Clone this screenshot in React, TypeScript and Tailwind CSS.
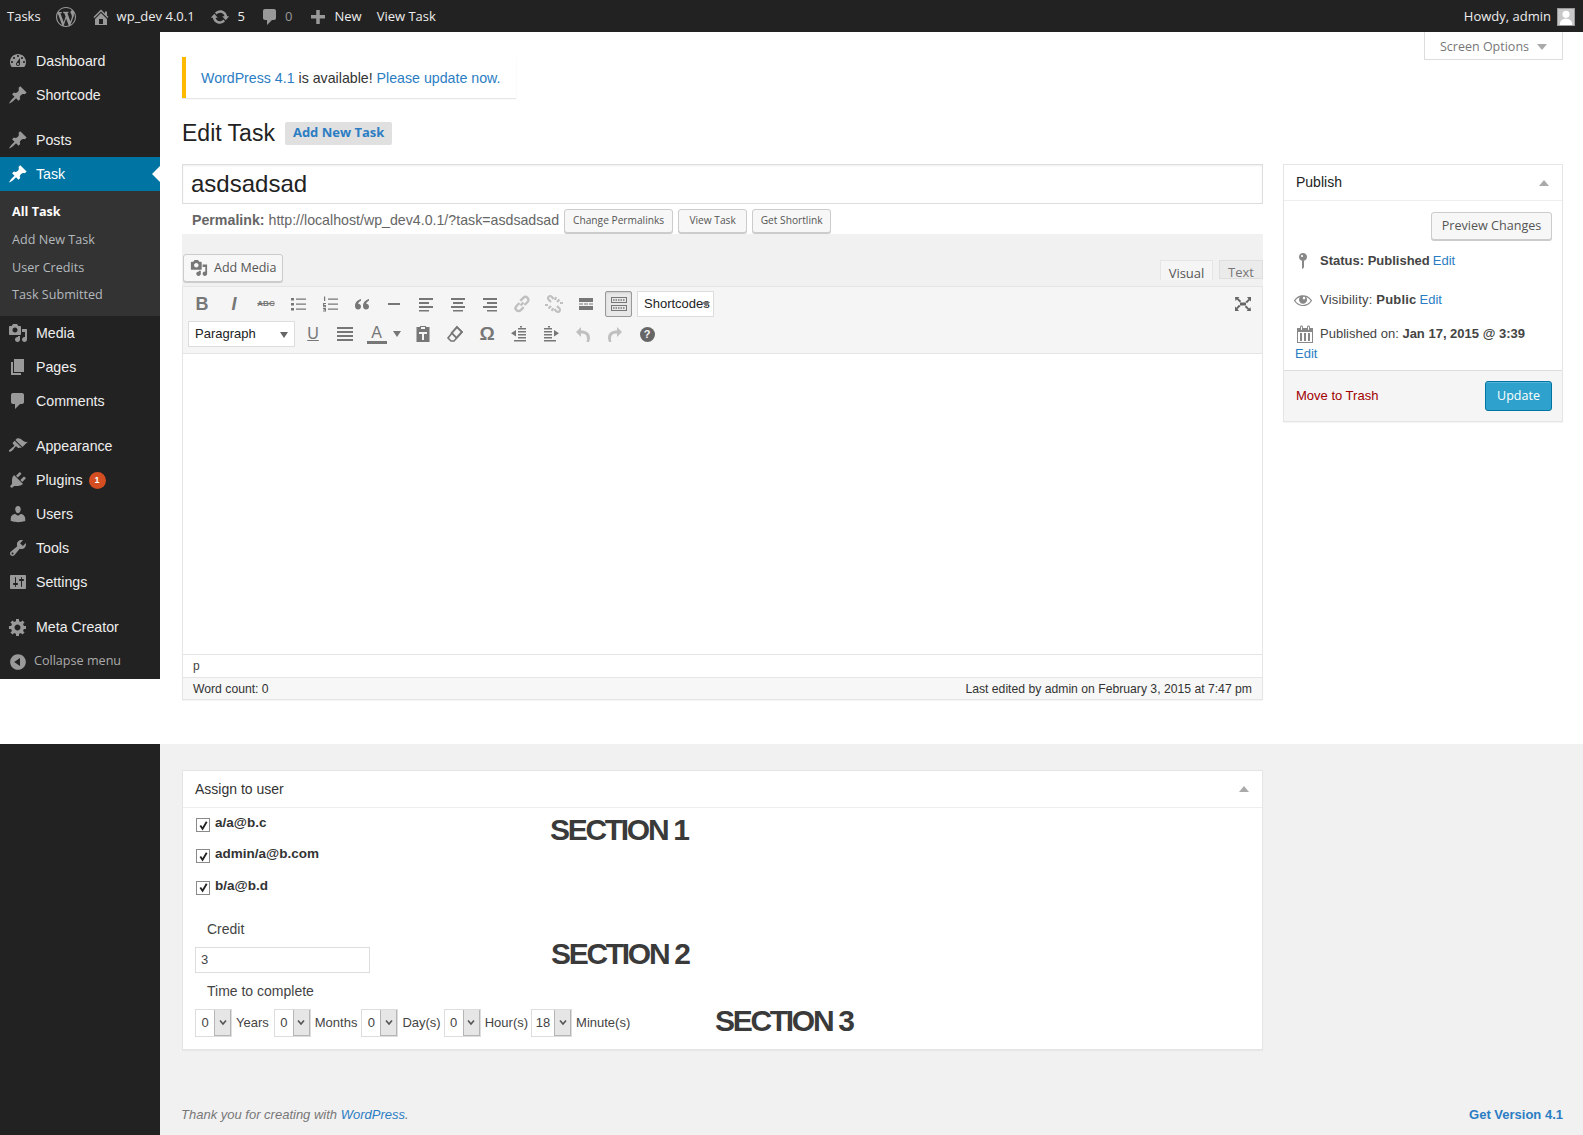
import type { ReactNode } from "react";

const sans = "font-['Liberation_Sans',Arial,sans-serif]";
const open = "font-['Open_Sans',Arial,sans-serif]";
const linkBlue = "text-[#2b7dc3]";

function Dash({ d, size = 20, className = "" }: { d: string; size?: number; className?: string }) {
  return (
    <svg viewBox="0 0 20 20" width={size} height={size} fill="currentColor" className={`shrink-0 ${className}`}>
      <path d={d} />
    </svg>
  );
}

const icons = {
  dashboard:
    "M3.76 16h12.48c1.1-1.37 1.76-3.11 1.76-5 0-4.42-3.58-8-8-8s-8 3.58-8 8c0 1.89.66 3.63 1.76 5zM10 4c.55 0 1 .45 1 1s-.45 1-1 1-1-.45-1-1 .45-1 1-1zM6 6c.55 0 1 .45 1 1s-.45 1-1 1-1-.45-1-1 .45-1 1-1zm8 0c.55 0 1 .45 1 1s-.45 1-1 1-1-.45-1-1 .45-1 1-1zm-5.37 5.55L12 7v6c0 1.1-.9 2-2 2s-2-.9-2-2c0-.57.24-1.08.63-1.45zM4 10c.55 0 1 .45 1 1s-.45 1-1 1-1-.45-1-1 .45-1 1-1zm12 0c.55 0 1 .45 1 1s-.45 1-1 1-1-.45-1-1 .45-1 1-1zm-5 3c0-.55-.45-1-1-1s-1 .45-1 1 .45 1 1 1 1-.45 1-1z",
  pin: "M10.44 3.02l1.82-1.82 6.36 6.35-1.83 1.82c-1.05-.68-2.48-.57-3.41.36l-.75.75c-.92.93-1.04 2.35-.35 3.41l-1.83 1.82-2.41-2.41-2.8 2.79c-.42.42-3.38 2.71-3.8 2.29s1.86-3.39 2.28-3.81l2.79-2.79L4.1 9.36l1.83-1.82c1.05.69 2.48.57 3.4-.36l.75-.75c.93-.92 1.05-2.35.36-3.41z",
  media:
    "M13 11V4c0-.55-.45-1-1-1h-1.67L9 1H5L3.67 3H2c-.55 0-1 .45-1 1v7c0 .55.45 1 1 1h10c.55 0 1-.45 1-1zM7 4.5c1.38 0 2.5 1.12 2.5 2.5S8.38 9.5 7 9.5 4.5 8.38 4.5 7 5.62 4.5 7 4.5zM14 6h5v10.5c0 1.38-1.12 2.5-2.5 2.5S14 17.88 14 16.5s1.12-2.5 2.5-2.5c.17 0 .34.02.5.05V9h-3V6zm-4 8.05V13h2v3.5c0 1.38-1.12 2.5-2.5 2.5S7 17.88 7 16.5 8.12 14 9.5 14c.17 0 .34.02.5.05z",
  page: "M6 15V2h10v13H6zm-1 1h8v2H3V5h2v11z",
  comment: "M5 2h9c1.1 0 2 .9 2 2v7c0 1.1-.9 2-2 2h-2l-5 5v-5H5c-1.1 0-2-.9-2-2V4c0-1.1.9-2 2-2z",
  appearance:
    "M14.48 11.06L7.41 3.99l1.5-1.5c.5-.56 2.3-.47 3.51.32 1.21.8 1.43 1.28 2.91 2.1 1.18.64 2.45 1.26 4.45.85zm-.71.71L6.7 4.7 4.93 6.47c-.39.39-.39 1.02 0 1.41l1.06 1.06c.39.39.39 1.03 0 1.42-.6.6-1.43 1.11-2.21 1.69-.35.26-.7.53-1.01.84C1.43 13.23.4 14.91 1.1 15.6c.7.7 2.38-.33 3.72-1.67.31-.31.58-.66.84-1.01.58-.78 1.09-1.61 1.69-2.21.39-.39 1.02-.39 1.41 0l1.06 1.06c.39.39 1.02.39 1.41 0z",
  plugins:
    "M13.11 4.36L9.87 7.6 8 5.73l3.24-3.24c.35-.34 1.05-.2 1.56.32.52.51.66 1.21.31 1.55zm-8 1.77l.91-1.12 9.01 9.01-1.19.84c-.71.71-2.63 1.16-3.82 1.16H6.14L4.9 17.26c-.59.59-1.54.59-2.12 0-.59-.58-.59-1.53 0-2.12l1.24-1.24v-3.88c0-1.13.4-3.19 1.09-3.89zm7.26 3.97l3.24-3.24c.34-.35 1.04-.21 1.55.31.52.51.66 1.21.31 1.55l-3.24 3.25z",
  users:
    "M10 9.25c-2.27 0-2.73-3.44-2.73-3.44C7 4.02 7.82 2 9.97 2c2.16 0 2.98 2.02 2.71 3.81 0 0-.41 3.44-2.68 3.44zm0 2.57L12.72 10c2.39 0 4.52 2.33 4.52 4.53v2.49s-3.65 1.13-7.24 1.13c-3.65 0-7.24-1.13-7.24-1.13v-2.49c0-2.25 1.94-4.48 4.47-4.48z",
  tools:
    "M16.68 9.77c-1.34 1.34-3.3 1.67-4.95.99l-5.41 6.52c-.99.99-2.59.99-3.58 0s-.99-2.59 0-3.57l6.52-5.42c-.68-1.65-.35-3.61.99-4.95 1.28-1.28 3.12-1.62 4.72-1.06l-2.89 2.89 2.82 2.82 2.86-2.87c.53 1.58.18 3.39-1.08 4.65zM3.81 16.21c.4.39 1.04.39 1.43 0 .4-.4.4-1.04 0-1.43-.39-.4-1.03-.4-1.43 0-.39.39-.39 1.03 0 1.43z",
  settings:
    "M18 16V4c0-.55-.45-1-1-1H3c-.55 0-1 .45-1 1v12c0 .55.45 1 1 1h14c.55 0 1-.45 1-1zM8 11h1c.55 0 1 .45 1 1s-.45 1-1 1H8v1.5c0 .28-.22.5-.5.5s-.5-.22-.5-.5V13H6c-.55 0-1-.45-1-1s.45-1 1-1h1V5.5c0-.28.22-.5.5-.5s.5.22.5.5V11zm5-2h-1c-.55 0-1-.45-1-1s.45-1 1-1h1V5.5c0-.28.22-.5.5-.5s.5.22.5.5V7h1c.55 0 1 .45 1 1s-.45 1-1 1h-1v5.5c0 .28-.22.5-.5.5s-.5-.22-.5-.5V9z",
  gear: "M18 12h-2.18c-.17.7-.44 1.35-.81 1.93l1.54 1.54-2.1 2.1-1.54-1.54c-.58.36-1.23.63-1.91.79V19H8v-2.18c-.68-.16-1.33-.43-1.91-.79l-1.54 1.54-2.12-2.12 1.54-1.54c-.36-.58-.63-1.23-.79-1.91H1V9.03h2.17c.16-.7.44-1.35.8-1.94L2.43 5.55l2.1-2.1 1.54 1.54c.58-.37 1.24-.64 1.93-.81V2h3v2.18c.68.16 1.33.43 1.91.79l1.54-1.54 2.12 2.12-1.54 1.54c.36.59.64 1.24.8 1.94H18V12zm-8.5 1.5c1.66 0 3-1.34 3-3s-1.34-3-3-3-3 1.34-3 3 1.34 3 3 3z",
  collapse: "M10 2.16c4.33 0 7.84 3.51 7.84 7.84s-3.51 7.84-7.84 7.84S2.16 14.33 2.16 10 5.71 2.16 10 2.16zm2 11.72V6.12L6.18 9.97z",
  home: "M16 8.5l1.53 1.53-1.06 1.06L10 4.62l-6.47 6.47-1.06-1.06L10 2.5l4 4v-2h2v4zm-6-2.46l6 5.99V18H4v-5.97zM12 17v-5H8v5h4z",
  update:
    "M10.2 3.28c3.53 0 6.43 2.61 6.92 6h2.08l-3.5 4-3.5-4h2.32c-.45-1.97-2.21-3.45-4.32-3.45-1.45 0-2.73.71-3.54 1.78L4.95 5.66C6.23 4.2 8.11 3.28 10.2 3.28zm-.4 13.44c-3.52 0-6.43-2.61-6.92-6H.8l3.5-4c1.17 1.33 2.33 2.67 3.5 4H5.48c.45 1.97 2.21 3.45 4.32 3.45 1.45 0 2.73-.71 3.54-1.78l1.71 1.95c-1.28 1.46-3.15 2.38-5.25 2.38z",
  plus: "M17 8v3.5h-5.25V17h-3.5v-5.5H3V8h5.25V3h3.5v5z",
  wp: "M20 10c0-5.51-4.49-10-10-10C4.48 0 0 4.49 0 10c0 5.52 4.48 10 10 10 5.51 0 10-4.48 10-10zM7.78 15.37L4.37 6.22c.55-.02 1.17-.08 1.17-.08.5-.06.44-1.13-.06-1.11 0 0-1.45.11-2.37.11-.18 0-.37 0-.58-.01C4.12 2.69 6.87 1.11 10 1.11c2.33 0 4.45.87 6.05 2.34-.68-.11-1.65.39-1.65 1.58 0 .74.45 1.36.9 2.1.35.61.55 1.36.55 2.46 0 1.49-1.4 5-1.4 5l-3.03-8.37c.54-.02.82-.17.82-.17.5-.05.44-1.25-.06-1.22 0 0-1.44.12-2.38.12-.87 0-2.33-.12-2.33-.12-.5-.03-.56 1.2-.06 1.22l.92.08 1.26 3.41zM17.41 10c.24-.64.74-1.87.43-4.25.7 1.29 1.05 2.71 1.05 4.25 0 3.29-1.73 6.24-4.4 7.78.97-2.59 1.94-5.2 2.92-7.78zM6.1 18.09C3.12 16.65 1.11 13.53 1.11 10c0-1.3.23-2.48.72-3.59C3.25 10.3 4.67 14.2 6.1 18.09zm4.03-6.63l2.58 6.98c-.86.29-1.76.45-2.71.45-.79 0-1.57-.11-2.29-.33.81-2.38 1.62-4.74 2.42-7.1z",
  eye: "M18.3 9.5C15 4.9 8.5 3.8 3.9 7.2c-1.2.9-2.2 2.1-3 3.4.2.4.5.8.8 1.2 3.3 4.6 9.6 5.6 14.2 2.4.9-.7 1.7-1.4 2.4-2.4.3-.4.5-.8.8-1.2-.3-.4-.5-.8-.8-1.1zm-8.2-2.3c.5-.5 1.3-.5 1.8 0s.5 1.3 0 1.8-1.3.5-1.8 0c-.5-.4-.5-1.3 0-1.8zm-.1 7.7c-3.1 0-6-1.6-7.7-4.2C3.5 9 5.1 7.8 7 7c-.7.8-1 1.7-1 2.7 0 2.2 1.7 4.1 4 4.1 2.2 0 4.1-1.7 4.1-4 0-1-.4-2-1.1-2.7 1.9.8 3.5 2 4.7 3.7-1.7 2.6-4.6 4.2-7.7 4.1z",
  status: "M14 6c0 1.86-1.28 3.41-3 3.86V16c0 1-2 2-2 2V9.86c-1.72-.45-3-2-3-3.86 0-2.21 1.79-4 4-4s4 1.79 4 4zM8 5c0 .55.45 1 1 1s1-.45 1-1-.45-1-1-1-1 .45-1 1z",
  calendar:
    "M15 4h3v15H2V4h3V3c0-.83.67-1.5 1.5-1.5S8 2.17 8 3v1h4V3c0-.83.67-1.5 1.5-1.5S15 2.17 15 3v1zM6 3v2.5c0 .28.22.5.5.5s.5-.22.5-.5V3c0-.28-.22-.5-.5-.5S6 2.72 6 3zm7 0v2.5c0 .28.22.5.5.5s.5-.22.5-.5V3c0-.28-.22-.5-.5-.5s-.5.22-.5.5zm4 15V8H3v10h14zM5 9h2v8H5V9zm4 0h2v8H9V9zm4 0h2v8h-2V9z",
};

type MenuEntry = { label: string; icon: keyof typeof icons; badge?: string };

function MenuItem({ label, icon, badge, active }: MenuEntry & { active?: boolean }) {
  return (
    <div
      className={`relative flex h-[34px] items-center gap-2 pl-2 text-[14.2px] ${
        active ? "bg-[#0074a2] text-white" : "text-[#eeeeee]"
      }`}
    >
      <Dash d={icons[icon]} className={active ? "text-white" : "text-[#999999]"} />
      <span className="pt-[2px]">{label}</span>
      {badge && (
        <span className="-ml-[2px] mt-px flex h-[17px] w-[17px] items-center justify-center rounded-full bg-[#d54e21] text-[9px] font-bold text-white">
          {badge}
        </span>
      )}
      {active && (
        <span className="absolute right-0 top-[9px] h-0 w-0 border-y-[8px] border-r-[8px] border-y-transparent border-r-white" />
      )}
    </div>
  );
}

function Sidebar() {
  const group = (items: MenuEntry[]) => items.map((m) => <MenuItem key={m.label} {...m} />);
  return (
    <aside className={`h-[647px] w-[160px] shrink-0 bg-[#222222] pt-3 ${sans}`}>
      {group([
        { label: "Dashboard", icon: "dashboard" },
        { label: "Shortcode", icon: "pin" },
      ])}
      <div className="h-[11px]" />
      <MenuItem label="Posts" icon="pin" />
      <MenuItem label="Task" icon="pin" active />
      <div className={`flex h-[125px] flex-col bg-[#333333] pl-3 pt-[7px] text-[12.6px] text-[#b4b9be] ${open}`}>
        <div className="flex h-[28px] items-center font-bold text-white">All Task</div>
        <div className="flex h-[28px] items-center">Add New Task</div>
        <div className="flex h-[28px] items-center">User Credits</div>
        <div className="flex h-[26px] items-center">Task Submitted</div>
      </div>
      {group([
        { label: "Media", icon: "media" },
        { label: "Pages", icon: "page" },
        { label: "Comments", icon: "comment" },
      ])}
      <div className="h-[11px]" />
      {group([
        { label: "Appearance", icon: "appearance" },
        { label: "Plugins", icon: "plugins", badge: "1" },
        { label: "Users", icon: "users" },
        { label: "Tools", icon: "tools" },
        { label: "Settings", icon: "settings" },
      ])}
      <div className="h-[11px]" />
      <MenuItem label="Meta Creator" icon="gear" />
      <div className={`flex h-[34px] items-center gap-[6px] pl-2 pt-px text-[12.6px] text-[#aaaaaa] ${open}`}>
        <Dash d={icons.collapse} className="text-[#999999]" />
        <span>Collapse menu</span>
      </div>
    </aside>
  );
}

function AdminBar() {
  return (
    <header className={`flex h-8 shrink-0 items-center bg-[#222222] pt-px text-[13px] text-[#eeeeee] ${open}`}>
      <span className="ml-[7px]">Tasks</span>
      <Dash d={icons.wp} className="ml-[15px] text-[#999999]" />
      <Dash d={icons.home} className="ml-[15px] text-[#999999]" />
      <span className="ml-[6px]">wp_dev 4.0.1</span>
      <Dash d={icons.update} className="ml-[15px] text-[#999999]" />
      <span className="ml-[8px]">5</span>
      <Dash d={icons.comment} className="ml-[15px] text-[#999999]" />
      <span className="ml-[5px] text-[#999999]">0</span>
      <Dash d={icons.plus} className="ml-[16px] text-[#999999]" />
      <span className="ml-[6px]">New</span>
      <span className="ml-[15px]">View Task</span>
      <span className="ml-auto">Howdy, admin</span>
      <span className="ml-[6px] mr-2 flex h-[18px] w-[18px] items-end justify-center overflow-hidden border border-[#999999] bg-[#c8c8c8]">
        <svg viewBox="0 0 18 18" width="16" height="16" fill="#ffffff">
          <circle cx="9" cy="6" r="4" />
          <path d="M2 18c0-5 3-7 7-7s7 2 7 7z" />
        </svg>
      </span>
    </header>
  );
}

function SmallButton({ children, w }: { children: ReactNode; w: string }) {
  return (
    <span className={`flex h-6 items-center justify-center rounded-[3px] border border-[#cccccc] bg-[#f7f7f7] text-[10.2px] text-[#555555] shadow-[0_1px_0_#cccccc] ${open} ${w}`}>
      {children}
    </span>
  );
}

function Bars({ widths }: { widths: number[] }) {
  return (
    <span className="flex flex-col items-center gap-[2px]">
      {widths.map((w, i) => (
        <span key={i} className="h-[2px] bg-[#777777]" style={{ width: w }} />
      ))}
    </span>
  );
}

function ToolIcon({ children, w = "w-8" }: { children: ReactNode; w?: string }) {
  return <span className={`flex h-[26px] shrink-0 items-center justify-center text-[#777777] ${w}`}>{children}</span>;
}

function Svg({ children, muted }: { children: ReactNode; muted?: boolean }) {
  return (
    <svg viewBox="0 0 20 20" width="20" height="20" fill="currentColor" className={muted ? "text-[#c0c0c0]" : ""}>
      {children}
    </svg>
  );
}

function Toolbar() {
  const ul = (
    <Svg>
      <path d="M3 4h3v2.4H3zM3 9h3v2.4H3zM3 14h3v2.4H3zM8 4.5h10v1.2H8zM8 9.5h10v1.2H8zM8 14.5h10v1.2H8z" />
    </Svg>
  );
  const ol = (
    <Svg>
      <path d="M8 4.5h10v1.2H8zM8 9.5h10v1.2H8zM8 14.5h10v1.2H8zM4 2.5h1.2v4.6H4zM3 9h3v1H4.2v1H6v2.2H3v-1h2v-.3H3zM3 14h3v3.4H3v-.9h2v-.4H3.6v-.8H5v-.4H3z" />
    </Svg>
  );
  return (
    <div className="flex h-[68px] flex-col border border-[#e5e5e5] bg-[#f5f5f5] pl-[3px] pt-[4px]">
      <div className="flex h-[26px] items-center">
        <ToolIcon><span className={`text-[18px] font-bold ${sans}`}>B</span></ToolIcon>
        <ToolIcon><span className={`text-[18px] font-bold italic ${sans}`}>I</span></ToolIcon>
        <ToolIcon><span className={`text-[8px] font-bold line-through ${sans}`}>ABC</span></ToolIcon>
        <ToolIcon>{ul}</ToolIcon>
        <ToolIcon>{ol}</ToolIcon>
        <ToolIcon>
          <Svg>
            <path d="M9 5C5.500 6 3 8.500 3 12c0 2 1.200 3.500 3 3.500s3-1.300 3-3-1.200-2.800-2.800-2.800c.3-1.400 1.400-2.400 2.800-3zM17 5c-3.500 1-6 3.500-6 7 0 2 1.200 3.500 3 3.500s3-1.300 3-3-1.200-2.800-2.800-2.800c.3-1.400 1.400-2.400 2.800-3z" />
          </Svg>
        </ToolIcon>
        <ToolIcon><span className="h-[2px] w-[12px] bg-[#777777]" /></ToolIcon>
        <ToolIcon><Svg><path d="M3 4h14v2H3zM3 8h10v2H3zM3 12h14v2H3zM3 16h10v1.500H3z" /></Svg></ToolIcon>
        <ToolIcon><Svg><path d="M3 4h14v2H3zM5 8h10v2H5zM3 12h14v2H3zM5 16h10v1.500H5z" /></Svg></ToolIcon>
        <ToolIcon><Svg><path d="M3 4h14v2H3zM7 8h10v2H7zM3 12h14v2H3zM7 16h10v1.500H7z" /></Svg></ToolIcon>
        <ToolIcon>
          <svg viewBox="0 0 20 20" width="20" height="20" fill="none" stroke="#c0c0c0" strokeWidth="2.400">
            <path d="M8.500 11.500l3-3M7.500 9l-3 3c-1.200 1.200-1.200 3 0 4.200s3 1.200 4.200 0l3-3M12.500 11l3-3c1.200-1.200 1.200-3 0-4.200s-3-1.200-4.200 0l-3 3" />
          </svg>
        </ToolIcon>
        <ToolIcon>
          <svg viewBox="0 0 20 20" width="20" height="20" fill="none" stroke="#c0c0c0" strokeWidth="2.200">
            <path d="M7 8L4.500 5.500c-1.200-1.200 0-3.500 1.500-3.500.8 0 1.300.3 2 1l1.500 2M13 12l2.500 2.500c1.200 1.200 0 3.500-1.500 3.500-.8 0-1.300-.3-2-1l-1.500-2M13 8l2.500-2.500M11 6l1-3M16 9h3M7 12l-2.500 2.500M9 14l-1 3M4 11H1" />
          </svg>
        </ToolIcon>
        <ToolIcon><Svg><path d="M3 4h14v4H3zM3 9.500h4v1H3zM8 9.500h4v1H8zM13 9.500h4v1h-4zM3 12h14v4H3z" /></Svg></ToolIcon>
        <span className="ml-[3px] flex h-[26px] w-[27px] shrink-0 items-center justify-center rounded-[2px] border border-[#999999] bg-[#e8e8e8] text-[#777777] shadow-[inset_0_1px_2px_#cccccc]">
          <svg viewBox="0 0 20 20" width="20" height="20" fill="none" stroke="currentColor">
            <rect x="2.500" y="3.500" width="15" height="5" />
            <rect x="2.500" y="11.500" width="15" height="5" />
            <path d="M4 6h12M4 14h12" strokeDasharray="1.500 1" strokeWidth="1.500" />
          </svg>
        </span>
        <span className={`relative ml-[5px] flex h-[26px] w-[77px] shrink-0 items-center border border-[#dddddd] bg-white pl-[6px] text-[13px] text-[#222222] ${sans}`}>
          Shortcodes
          <span className="absolute right-[3px] top-[10px] h-0 w-0 border-x-[4px] border-t-[5px] border-x-transparent border-t-[#777777]" />
        </span>
        <span className="ml-auto mr-[9px] flex w-5 items-center justify-center text-[#666666]">
          <svg viewBox="0 0 20 20" width="20" height="20" fill="currentColor">
            <path d="M2 3h4.500L5.200 4.300l3 2.700-1.500 1.500-2.700-3L2.500 7zM18 3v4.500l-1.300-1.300-2.700 3-1.500-1.500 3-2.700L14 3zM2 17v-4.500l1.300 1.300 2.700-3 1.500 1.500-3 2.700L6 17zM18 17h-4.500l1.300-1.300-3-2.700 1.500-1.500 2.700 3 1.500-1.300z" />
            <rect x="7" y="8.500" width="6" height="3" />
          </svg>
        </span>
      </div>
      <div className="mt-[4px] flex h-[26px] items-center">
        <span className={`relative ml-[2px] flex h-[26px] w-[107px] shrink-0 items-center border border-[#dddddd] bg-white pl-[6px] text-[13px] text-[#222222] ${sans}`}>
          Paragraph
          <span className="absolute right-[6px] top-[10px] h-0 w-0 border-x-[4px] border-t-[6px] border-x-transparent border-t-[#666666]" />
        </span>
        <span className="w-[2px] shrink-0" />
        <ToolIcon><span className={`text-[16px] underline ${sans}`}>U</span></ToolIcon>
        <ToolIcon><Bars widths={[16, 16, 16, 16]} /></ToolIcon>
        <ToolIcon w="w-[31px]">
          <span className="flex flex-col items-center">
            <span className={`text-[16px] leading-[17px] ${sans}`}>A</span>
            <span className="h-[3px] w-[20px] bg-[#777777]" />
          </span>
        </ToolIcon>
        <span className="ml-[1px] mr-[6px] h-0 w-0 shrink-0 border-x-[4px] border-t-[6px] border-x-transparent border-t-[#777777]" />
        <ToolIcon>
          <Svg>
            <path d="M7 3V2h6v1h3.500v15h-13V3zm1 0v2h4V3zM6 8v2h3v6h2v-6h3V8z" fillRule="evenodd" />
          </Svg>
        </ToolIcon>
        <ToolIcon>
          <svg viewBox="0 0 20 20" width="20" height="20" fill="none" stroke="#777777" strokeWidth="1.600">
            <path d="M12 3l5 5-8 9-3 0-3-3 9-11z" />
            <path d="M12 3l5 5-5.500 6-5-5z" fill="#777777" />
            <path d="M12 4.500l3.500 3.500-4 4.500-3.500-3.500z" fill="#f5f5f5" stroke="none" />
          </svg>
        </ToolIcon>
        <ToolIcon><span className={`text-[19px] font-bold ${sans}`}>Ω</span></ToolIcon>
        <ToolIcon>
          <Svg><path d="M9 4h8v1.500H9zM9 7h8v1.500H9zM9 10h8v1.500H9zM9 13h8v1.500H9zM5 16h12v1.500H5zM7 6v6.500L2 9.200zM11 2h2v1.500h-2z" /></Svg>
        </ToolIcon>
        <ToolIcon>
          <Svg><path d="M3 4h8v1.500H3zM3 7h8v1.500H3zM3 10h8v1.500H3zM3 13h8v1.500H3zM3 16h12v1.500H3zM13 6v6.500l5-3.300zM7 2h2v1.500H7z" /></Svg>
        </ToolIcon>
        <ToolIcon>
          <Svg muted><path d="M8 3L3 8l5 5V9.500c3.500 0 6 1 6 5.500 0 1.500-.2 2.500-.5 3H16c.7-1.500 1-3 1-4.500C17 9 13 6.500 8 6.500z" /></Svg>
        </ToolIcon>
        <ToolIcon>
          <Svg muted><path d="M12 3l5 5-5 5V9.500c-3.500 0-6 1-6 5.500 0 1.500.2 2.500.5 3H4c-.7-1.500-1-3-1-4.500C3 9 7 6.500 12 6.500z" /></Svg>
        </ToolIcon>
        <ToolIcon>
          <span className={`flex h-[15px] w-[15px] items-center justify-center rounded-full bg-[#666666] text-[11px] font-bold text-[#f5f5f5] ${sans}`}>?</span>
        </ToolIcon>
      </div>
    </div>
  );
}

function EditorColumn() {
  return (
    <div className="w-[1081px] shrink-0">
      <div className={`flex h-10 items-center border border-[#dddddd] bg-white pl-2 text-[24px] text-[#222222] shadow-[inset_0_1px_2px_rgba(0,0,0,0.07)] ${sans}`}>
        asdsadsad
      </div>
      <div className="flex h-[30px] items-center gap-[5px] pl-[10px] pt-1 text-[14.2px] text-[#666666]">
        <span>
          <b className="text-[#666666]">Permalink:</b> http://localhost/wp_dev4.0.1/?task=asdsadsad
        </span>
        <SmallButton w="w-[109px]">Change Permalinks</SmallButton>
        <SmallButton w="w-[69px]">View Task</SmallButton>
        <SmallButton w="w-[79px]">Get Shortlink</SmallButton>
      </div>
      <div className="flex h-[52px] items-start justify-between bg-[#f1f1f1] pl-px pt-5">
        <span className={`flex h-7 w-[100px] items-center gap-[6px] rounded-[3px] border border-[#cccccc] bg-[#f7f7f7] pl-[6px] text-[12.5px] text-[#555555] shadow-[0_1px_0_#cccccc] ${open}`}>
          <Dash d={icons.media} size={18} className="text-[#777777]" />
          Add Media
        </span>
        <div className={`mt-[6px] flex text-[13px] text-[#777777] ${open}`}>
          <span className="flex h-5 w-[53px] items-center justify-center border border-b-0 border-[#e5e5e5] bg-[#f5f5f5] pt-[7px] text-[#555555]">Visual</span>
          <span className="ml-[6px] flex h-[19px] w-[44px] items-center justify-center border border-[#dedede] bg-[#ebebeb] pt-[7px]">Text</span>
        </div>
      </div>
      <Toolbar />
      <div className="h-[300px] border-x border-[#e5e5e5] bg-white" />
      <div className="flex h-[23px] items-center border border-b-0 border-[#e5e5e5] bg-white pl-[10px] text-[12px] text-[#444444]">p</div>
      <div className="flex h-[23px] items-center justify-between border border-[#e5e5e5] bg-[#f7f7f7] px-[10px] pt-px text-[12.2px] text-[#333333] shadow-[0_1px_1px_rgba(0,0,0,0.04)]">
        <span>Word count: 0</span>
        <span>Last edited by admin on February 3, 2015 at 7:47 pm</span>
      </div>
    </div>
  );
}

function Caret() {
  return <span className="h-0 w-0 border-x-[5px] border-b-[6px] border-x-transparent border-b-[#aaaaaa]" />;
}

function PublishBox() {
  return (
    <div className="flex h-[258px] w-[280px] shrink-0 flex-col border border-[#e5e5e5] bg-white text-[13px] text-[#444444] shadow-[0_1px_1px_rgba(0,0,0,0.04)]">
      <div className="flex h-[36px] shrink-0 items-center justify-between border-b border-[#eeeeee] pl-3 pr-[13px] text-[14px] text-[#222222]">
        Publish
        <Caret />
      </div>
      <div className="flex h-[39px] shrink-0 items-end justify-end pr-[10px]">
        <span className={`flex h-7 w-[121px] items-center justify-center rounded-[3px] border border-[#cccccc] bg-[#f7f7f7] text-[12.6px] text-[#555555] shadow-[0_1px_0_#cccccc] ${open}`}>
          Preview Changes
        </span>
      </div>
      <div className="mt-[10px] flex h-[22px] items-center pl-[9px]">
        <Dash d={icons.status} className="mr-[7px] text-[#888888]" />
        <b>Status: Published</b>
        <span className={`ml-[3px] ${linkBlue}`}>Edit</span>
      </div>
      <div className="mt-[17px] flex h-[22px] items-center pl-[9px]">
        <Dash d={icons.eye} className="mr-[7px] text-[#888888]" />
        <span className="tracking-[0.2px]">Visibility: <b>Public</b></span>
        <span className={`ml-[3px] ${linkBlue}`}>Edit</span>
      </div>
      <div className="mt-[13px] flex h-[20px] items-center pl-[11px]">
        <Dash d={icons.calendar} className="mr-[5px] text-[#888888]" />
        <span>Published on: <b>Jan 17, 2015 @ 3:39</b></span>
      </div>
      <div className={`h-[20px] pl-[11px] leading-[20px] ${linkBlue}`}>Edit</div>
      <div className="mt-auto flex h-[51px] items-center justify-between border-t border-[#dddddd] bg-[#f5f5f5] pl-3 pr-[10px]">
        <span className="text-[#a00000]">Move to Trash</span>
        <span className={`flex h-[30px] w-[67px] items-center justify-center rounded-[3px] border border-[#0074a2] bg-[#2ea2cc] pt-px text-[12.5px] text-white shadow-[inset_0_1px_0_rgba(120,200,230,0.5)] ${open}`}>
          Update
        </span>
      </div>
    </div>
  );
}

function Check() {
  return (
    <span className="flex h-[14px] w-[14px] shrink-0 items-center justify-center border border-[#8a8a8a] bg-white">
      <svg viewBox="0 0 12 12" width="11" height="11" fill="none" stroke="#222222" strokeWidth="2">
        <path d="M2.500 6l2.500 3.500L9.500 2" />
      </svg>
    </span>
  );
}

function FakeSelect({ value, w = "w-[37px]" }: { value: string; w?: string }) {
  return (
    <span className={`flex h-7 shrink-0 border border-[#dddddd] bg-white ${w}`}>
      <span className="flex flex-1 items-center justify-center text-[13px] text-[#444444]">{value}</span>
      <span className="flex w-[17px] items-center justify-center border-x border-b border-[#b5b5b5] bg-[#e6e6e6]">
        <svg viewBox="0 0 10 10" width="10" height="10" fill="none" stroke="#555555" strokeWidth="1.600">
          <path d="M2 3.500L5 7l3-3.500" />
        </svg>
      </span>
    </span>
  );
}

function Annotation({ children, className }: { children: ReactNode; className: string }) {
  return (
    <span className={`absolute text-[30px] font-bold leading-none tracking-[-2.300px] text-[#3a3a3a] ${className}`}>{children}</span>
  );
}

function AssignBox() {
  const users = ["a/a@b.c", "admin/a@b.com", "b/a@b.d"];
  const parts = [
    { v: "0", label: "Years", gap: "mr-[5px]" },
    { v: "0", label: "Months", gap: "mr-[4px]" },
    { v: "0", label: "Day(s)", gap: "mr-[3px]" },
    { v: "0", label: "Hour(s)", gap: "mr-[3px]" },
    { v: "18", label: "Minute(s)", gap: "" },
  ];
  return (
    <div className="relative h-[280px] w-[1081px] border border-[#e5e5e5] bg-white text-[14px] text-[#444444] shadow-[0_1px_1px_rgba(0,0,0,0.04)]">
      <div className="flex h-[37px] items-center justify-between border-b border-[#eeeeee] pl-3 pr-[13px] text-[#333333]">
        Assign to user
        <Caret />
      </div>
      <div className="flex flex-col pl-[13px] pt-[7px]">
        {users.map((u) => (
          <div key={u} className="flex h-[31.3px] items-start gap-[5px]">
            <span className="mt-[3px]"><Check /></span>
            <b className="text-[13.5px] leading-[16px] text-[#333333]">{u}</b>
          </div>
        ))}
        <div className="ml-[11px] mt-[10px] leading-[20px]">Credit</div>
        <div className="-ml-px mt-[8px] flex h-[26px] w-[175px] items-center border border-[#dddddd] pl-[5px] text-[13px]">3</div>
        <div className="ml-[11px] mt-[8px] leading-[20px]">Time to complete</div>
        <div className="-ml-px mt-[8px] flex items-center text-[13px]">
          {parts.map((p, i) => (
            <span key={i} className={`flex items-center gap-[4px] ${p.gap}`}>
              <FakeSelect value={p.v} w={p.v === "18" ? "w-[41px]" : "w-[37px]"} />
              <span>{p.label}</span>
            </span>
          ))}
        </div>
      </div>
      <Annotation className="left-[367px] top-[44px]">SECTION 1</Annotation>
      <Annotation className="left-[368px] top-[168px]">SECTION 2</Annotation>
      <Annotation className="left-[532px] top-[235px]">SECTION 3</Annotation>
    </div>
  );
}

export default function App() {
  return (
    <div className={`flex h-[1135px] w-[1583px] flex-col overflow-hidden bg-white ${sans}`}>
      <AdminBar />
      <div className="flex h-[712px] shrink-0">
        <Sidebar />
        <main className="flex-1 pl-[22px]">
          <div className={`float-right mr-5 flex h-7 w-[139px] items-center justify-center gap-2 border border-t-0 border-[#dddddd] pt-[3px] text-[12.5px] text-[#777777] ${open}`}>
            Screen Options
            <span className="h-0 w-0 border-x-[5px] border-t-[6px] border-x-transparent border-t-[#aaaaaa]" />
          </div>
          <div className="mt-[25px] flex h-[41px] w-[334px] items-center border-l-4 border-[#ffba00] bg-white pl-[15px] pt-[3px] text-[14.2px] text-[#333333] shadow-[0_1px_1px_rgba(0,0,0,0.1)]">
            <span>
              <span className={linkBlue}>WordPress 4.1</span> is available! <span className={linkBlue}>Please update now.</span>
            </span>
          </div>
          <div className="mt-[20px] flex h-[30px] items-center">
            <h1 className="text-[23px] text-[#222222]">Edit Task</h1>
            <span className={`ml-[10px] flex h-[23px] items-center rounded-[2px] bg-[#e0e0e0] px-2 text-[13px] font-bold ${linkBlue} ${open}`}>
              Add New Task
            </span>
          </div>
          <div className="mt-[16px] flex gap-5">
            <EditorColumn />
            <PublishBox />
          </div>
        </main>
      </div>
      <div className="flex flex-1">
        <div className="w-[160px] shrink-0 bg-[#222222]" />
        <div className="flex-1 bg-[#f1f1f1] pl-[22px] pt-[26px]">
          <AssignBox />
          <div className="mt-[55px] flex items-center justify-between pr-5 text-[13px]">
            <i className="-ml-[1px] text-[#777777]">
              Thank you for creating with <span className={linkBlue}>WordPress</span>.
            </i>
            <b className={linkBlue}>Get Version 4.1</b>
          </div>
        </div>
      </div>
    </div>
  );
}
